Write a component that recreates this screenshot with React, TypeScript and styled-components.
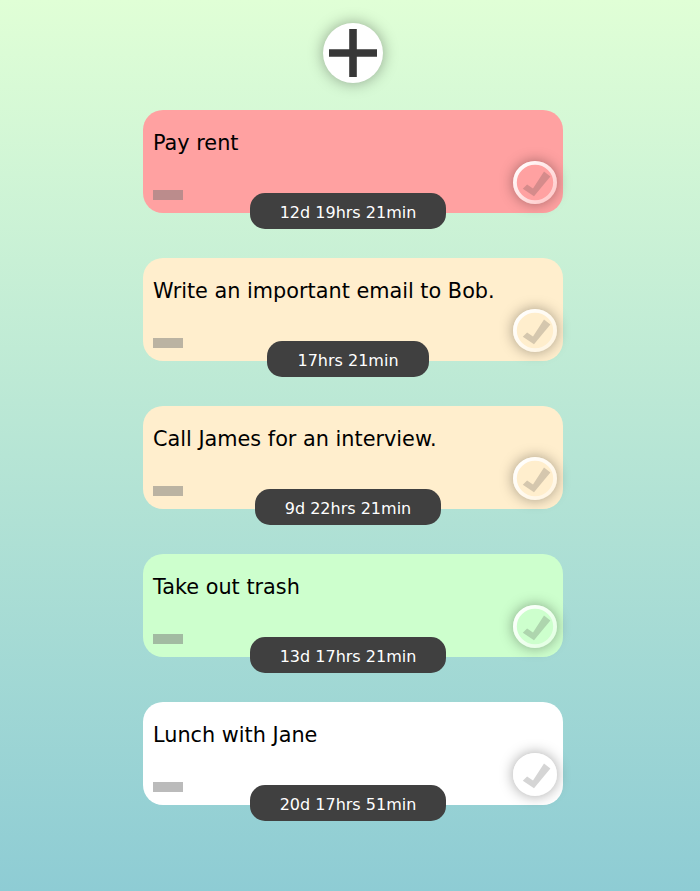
import React from "react";
import styled, { createGlobalStyle } from "styled-components";

const GlobalStyle = createGlobalStyle`
  * { box-sizing: border-box; }
  body {
    margin: 0;
    font-family: "DejaVu Sans", sans-serif;
  }
`;

const Page = styled.main`
  height: 891px;
  padding: 23px 137px 0 143px;
  display: flex;
  flex-direction: column;
  align-items: center;
  overflow: hidden;
  background: linear-gradient(to bottom, #e0ffd6, #8eccd4);
`;

const AddButton = styled.button`
  flex: none;
  width: 60px;
  height: 60px;
  padding: 0;
  border: 0;
  border-radius: 50%;
  background: #fff;
  box-shadow: 0 0 15px rgba(0, 0, 0, 0.35);
  display: flex;
  align-items: center;
  justify-content: center;
`;

const List = styled.ul`
  list-style: none;
  margin: 27px 0 0;
  padding: 0;
  width: 420px;
  display: grid;
  gap: 45px;
`;

const Card = styled.li<{ $color: string }>`
  position: relative;
  height: 103px;
  padding: 21px 10px 13px;
  border-radius: 20px;
  background: ${(p) => p.$color};
  display: flex;
  flex-direction: column;
  justify-content: space-between;
`;

const Title = styled.span`
  font-size: 20.8px;
  line-height: 25px;
  color: #000;
`;

const CollapseButton = styled.button`
  width: 30px;
  height: 10px;
  padding: 0;
  border: 0;
  background: #777;
  opacity: 0.5;
`;

const TimeBadge = styled.div`
  position: absolute;
  left: 0;
  right: 10px;
  bottom: -16px;
  display: flex;
  justify-content: center;
`;

const TimeLeft = styled.span`
  height: 36px;
  padding: 1px 30px 0;
  border-radius: 15px;
  background: #404040;
  color: #fff;
  font-size: 16px;
  line-height: 37px;
  white-space: nowrap;
`;

const DoneButton = styled.button`
  position: absolute;
  right: 6px;
  bottom: 9px;
  width: 44px;
  height: 43px;
  padding: 0;
  border: 0;
  border-radius: 50%;
  background: transparent;
  box-shadow: 0 0 14px rgba(0, 0, 0, 0.36);
  svg { display: block; }
`;

type Task = { title: string; left: string; color: string };

const tasks: Task[] = [
  { title: "Pay rent", left: "12d 19hrs 21min", color: "#ffa1a1" },
  { title: "Write an important email to Bob.", left: "17hrs 21min", color: "#ffeecd" },
  { title: "Call James for an interview.", left: "9d 22hrs 21min", color: "#ffeecd" },
  { title: "Take out trash", left: "13d 17hrs 21min", color: "#cdffcd" },
  { title: "Lunch with Jane", left: "20d 17hrs 51min", color: "#ffffff" },
];

const PlusIcon = () => (
  <svg width="48" height="48" viewBox="0 0 48 48">
    <path d="M20.2 0h7.6v20.2H48v7.6H27.8V48h-7.6V27.8H0v-7.6h20.2z" fill="#383838" />
  </svg>
);

const CheckIcon = () => (
  <svg width="44" height="43" viewBox="0 0 44 43">
    <defs>
      <linearGradient id="ring" x1="0.1" y1="0.1" x2="0.9" y2="0.9">
        <stop offset="0" stopColor="#fff" stopOpacity="0.96" />
        <stop offset="1" stopColor="#fff" stopOpacity="0.45" />
      </linearGradient>
    </defs>
    <ellipse cx="22" cy="21.5" rx="20.1" ry="19.6" fill="none" stroke="url(#ring)" strokeWidth="3.8" />
    <path d="M9.8 27.8L14.1 23.6L20 27.6L31 10.6L37.4 15.4L21 35.2z" fill="#404040" fillOpacity="0.22" />
  </svg>
);

export default function App() {
  return (
    <>
      <GlobalStyle />
      <Page>
        <AddButton aria-label="Add task">
          <PlusIcon />
        </AddButton>
        <List>
          {tasks.map((task) => (
            <Card key={task.title} $color={task.color}>
              <Title>{task.title}</Title>
              <CollapseButton aria-label="Minimize" />
              <DoneButton aria-label="Done">
                <CheckIcon />
              </DoneButton>
              <TimeBadge>
                <TimeLeft>{task.left}</TimeLeft>
              </TimeBadge>
            </Card>
          ))}
        </List>
      </Page>
    </>
  );
}
